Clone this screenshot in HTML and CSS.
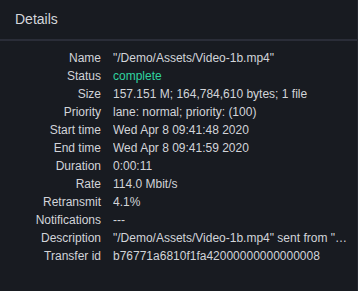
FILE: index.html
```html
<!DOCTYPE html>
<html lang="en">
<head>
<meta charset="utf-8"/>
<title>Details</title>
<link rel="stylesheet" href="styles.css">
</head>
<body>
  <div class="panel">
    <h1 class="panel-title">Details</h1>
    <dl class="details">
      <dt>Name</dt><dd>"/Demo/Assets/Video-1b.mp4"</dd>
      <dt>Status</dt><dd class="ok">complete</dd>
      <dt>Size</dt><dd>157.151 M; 164,784,610 bytes; 1 file</dd>
      <dt>Priority</dt><dd>lane: normal; priority: (100)</dd>
      <dt>Start time</dt><dd>Wed Apr 8 09:41:48 2020</dd>
      <dt>End time</dt><dd>Wed Apr 8 09:41:59 2020</dd>
      <dt>Duration</dt><dd>0:00:11</dd>
      <dt>Rate</dt><dd>114.0 Mbit/s</dd>
      <dt>Retransmit</dt><dd>4.1%</dd>
      <dt>Notifications</dt><dd>---</dd>
      <dt>Description</dt><dd>"/Demo/Assets/Video-1b.mp4" sent from "/Demo/Assets"</dd>
      <dt>Transfer id</dt><dd>b76771a6810f1fa42000000000000008</dd>
    </dl>
  </div>
</body>
</html>
```

FILE: styles.css
```css
html, body {
  margin: 0;
  height: 100%;
  background-color: #181b21;
  font-family: "Liberation Sans", Arial, sans-serif;
  color: #d2d4d9;
}
.panel {
  height: 100%;
  border-right: 1px solid #23262e;
  box-sizing: border-box;
}
.panel-title {
  margin: 0;
  padding: 10px 15px 11px;
  font-size: 14px;
  font-weight: normal;
  line-height: 18px;
  color: #d4d6db;
  border-bottom: 2px solid #2a2d38;
}
.details {
  display: grid;
  grid-template-columns: 101px 1fr;
  column-gap: 12px;
  margin: 8px 9px 0 0;
  font-size: 12px;
  line-height: 18px;
}
.details dt {
  text-align: right;
  white-space: nowrap;
}
.details dd {
  margin: 0;
  min-width: 0;
  white-space: nowrap;
  overflow: hidden;
  text-overflow: ellipsis;
}
.details .ok {
  color: #2fd3a0;
}
```
